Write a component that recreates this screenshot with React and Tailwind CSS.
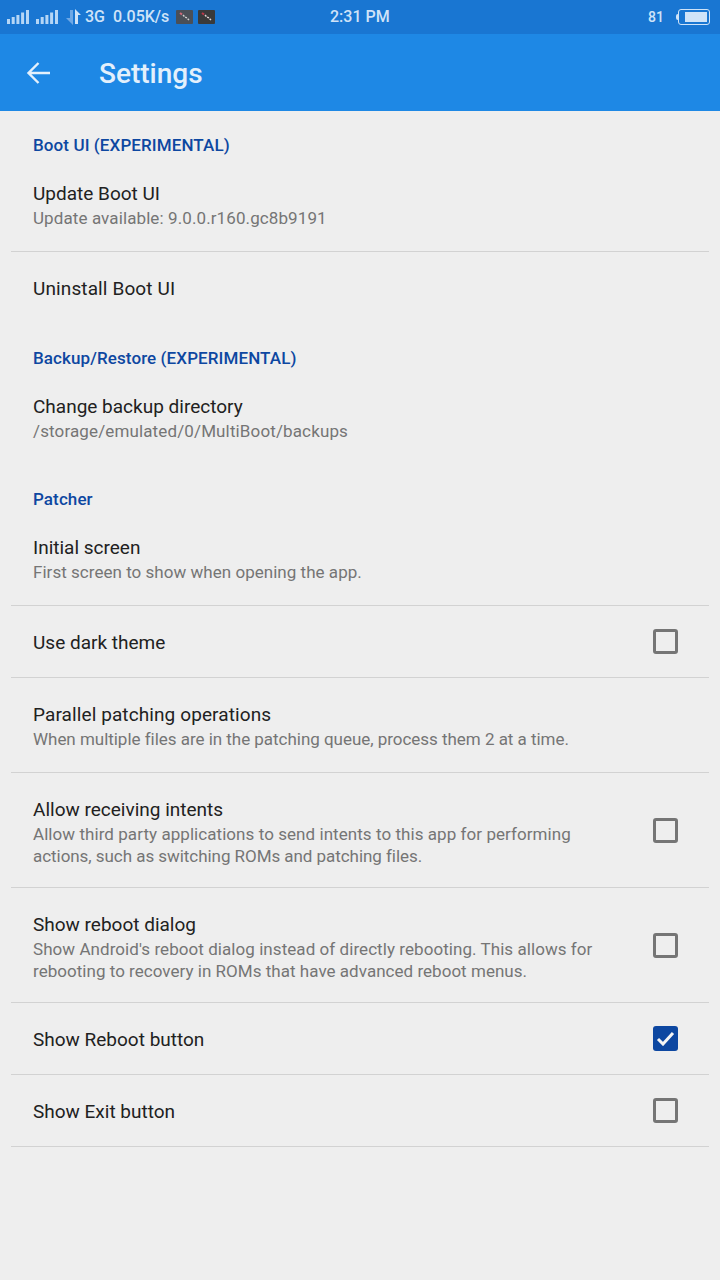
import React from "react";

const font = { fontFamily: "Roboto, sans-serif" };

function Signal() {
  return (
    <svg width="22" height="14" viewBox="0 0 22 14" className="block shrink-0">
      <g fill="#b5d6f6">
        <rect x="0" y="9" width="3" height="5" />
        <rect x="4.7" y="7" width="3" height="7" />
        <rect x="9.4" y="5" width="3" height="9" />
        <rect x="14.1" y="2.5" width="3" height="11.5" />
        <rect x="19" y="0" width="3" height="14" />
      </g>
    </svg>
  );
}

function Thumb({ a, b, c }) {
  return (
    <svg width="17" height="14" viewBox="0 0 17 14" className="block shrink-0">
      <rect width="17" height="14" rx="1" fill={a} />
      <path d="M4 3l2 1.5" stroke={c} strokeWidth="2" fill="none" />
      <path d="M7 5l2 2 2 1 2 2" stroke={b} strokeWidth="1.4" fill="none" strokeDasharray="2 1" />
    </svg>
  );
}

function StatusBar() {
  return (
    <div className="relative flex h-[34px] items-center bg-[#1976d2] pl-[7px] text-[#cfe3f8]">
      <Signal />
      <div className="ml-[7px]"><Signal /></div>
      <svg width="16" height="16" viewBox="0 0 16 16" className="ml-[7px] block shrink-0">
        <path d="M8 1v15L1 9h4V1z" fill="#6ea8e6" />
        <path d="M10 15V0l6 6h-3v9z" fill="#cfe3f8" />
      </svg>
      <span className="ml-[4px] text-[16px] font-medium leading-none">3G</span>
      <span className="ml-[8px] text-[16px] font-medium leading-none">0.05K/s</span>
      <div className="ml-[7px]"><Thumb a="#4a4f57" b="#d0d0d0" c="#d06a7a" /></div>
      <div className="ml-[5px]"><Thumb a="#3a3a3a" b="#e4d8d8" c="#c0394a" /></div>
      <span className="absolute left-[330px] text-[16px] font-medium leading-none">2:31 PM</span>
      <span className="absolute left-[648px] text-[14px] font-medium leading-none">81</span>
      <div className="absolute left-[676px] flex items-center">
        <div className="h-[6px] w-[2px] rounded-l-sm bg-[#cfe3f8]" />
        <div className="flex h-[16px] w-[32px] items-center rounded-[3px] border border-[#cfe3f8] p-[2px] pl-[6px]">
          <div className="h-full w-full bg-[#cfe3f8]" />
        </div>
      </div>
    </div>
  );
}

function Toolbar() {
  return (
    <div className="flex h-[77px] items-center bg-[#1e88e5] pl-[26px] text-[#e3f0fc]">
      <svg width="26" height="26" viewBox="0 0 26 26" fill="none" stroke="#e3f0fc" strokeWidth="2.4" className="block">
        <path d="M24 13H3M12.5 3L2.5 13l10 10" />
      </svg>
      <span className="ml-[47px] pt-[2px] text-[28px] font-medium leading-none">Settings</span>
    </div>
  );
}

function Header({ children, h }) {
  return (
    <div className={`flex items-end pl-[33px] text-[17px] font-medium leading-[22px] tracking-[0.1px] text-[#0d47a1] ${h}`}>
      <span>{children}</span>
    </div>
  );
}

function Box({ checked }) {
  if (checked) {
    return (
      <div className="flex h-[25px] w-[25px] items-center justify-center rounded-[3px] bg-[#0d47a1]">
        <svg width="19" height="15" viewBox="0 0 19 15" fill="none" stroke="#f5f5f5" strokeWidth="3" className="block">
          <path d="M2 8l5 5L17 2" />
        </svg>
      </div>
    );
  }
  return <div className="h-[25px] w-[25px] rounded-[3px] border-[3px] border-[#757575]" />;
}

function Row({ title, titleClass = "", lines, box, checked, h, divider = true, top = "pt-[24px]" }) {
  return (
    <div className={`mx-[11px] flex items-start px-[22px] ${h} ${divider ? "border-b border-[#d2d2d2]" : ""}`}>
      <div className={`min-w-0 flex-1 ${top}`}>
        <div className={`text-[19px] leading-[26px] text-[#212121] ${titleClass}`}>{title}</div>
        {lines && (
          <div className="text-[17px] leading-[22px] text-[#757575]">
            {lines.map(([text, cls]) => (
              <div key={text} className={cls}>{text}</div>
            ))}
          </div>
        )}
      </div>
      {box && (
        <div className="flex h-full items-center pr-[9px]">
          <Box checked={checked} />
        </div>
      )}
    </div>
  );
}

export default function App() {
  return (
    <div className="flex h-[1280px] w-[720px] flex-col overflow-hidden bg-[#eeeeee]" style={font}>
      <StatusBar />
      <Toolbar />
      <Header h="h-[45px]">Boot UI (EXPERIMENTAL)</Header>
      <Row h="h-[96px]" top="pt-[25px]" title="Update Boot UI" lines={[["Update available: 9.0.0.r160.gc8b9191", "tracking-[0.1px]"]]} />
      <Row h="h-[72px]" title="Uninstall Boot UI" titleClass="tracking-[0.12px]" divider={false} />
      <Header h="h-[45px]">Backup/Restore (EXPERIMENTAL)</Header>
      <Row h="h-[95px]" top="pt-[25px]" title="Change backup directory" lines={[["/storage/emulated/0/MultiBoot/backups", "tracking-[0.13px]"]]} divider={false} />
      <Header h="h-[46px]">Patcher</Header>
      <Row h="h-[96px]" top="pt-[25px]" title="Initial screen" lines={[["First screen to show when opening the app.", "tracking-[0.03px]"]]} />
      <Row h="h-[72px]" title="Use dark theme" box />
      <Row h="h-[95px]" title="Parallel patching operations" titleClass="tracking-[0.1px]" lines={[["When multiple files are in the patching queue, process them 2 at a time.", "tracking-[-0.03px]"]]} />
      <Row
        h="h-[115px]"
        title="Allow receiving intents"
        lines={[
          ["Allow third party applications to send intents to this app for performing", "tracking-[0.06px]"],
          ["actions, such as switching ROMs and patching files.", "tracking-[-0.05px]"],
        ]}
        box
      />
      <Row
        h="h-[115px]"
        title="Show reboot dialog"
        lines={[
          ["Show Android's reboot dialog instead of directly rebooting. This allows for", "tracking-[0.06px]"],
          ["rebooting to recovery in ROMs that have advanced reboot menus.", "tracking-[0.03px]"],
        ]}
        box
      />
      <Row h="h-[72px]" title="Show Reboot button" box checked />
      <Row h="h-[72px]" title="Show Exit button" box />
    </div>
  );
}
